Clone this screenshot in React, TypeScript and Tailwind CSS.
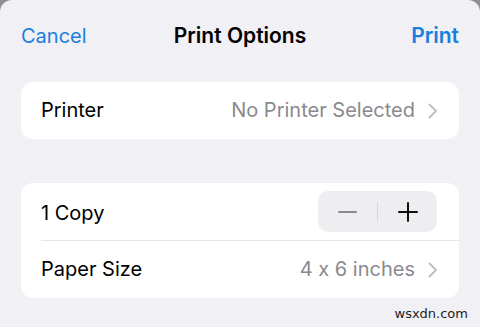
function Chevron() {
    return (
        <svg width="10" height="16" viewBox="0 0 10 16" className="mt-[1px]">
            <path d="M1.5 1.5 L8 8 L1.5 14.5" fill="none" stroke="#c0c0c4" strokeWidth="2" strokeLinecap="round" strokeLinejoin="round" />
        </svg>
    )
}

function Row({ label, value }: { label: string; value: string }) {
    return (
        <div className="flex h-[57px] items-center justify-between pb-[1px] pl-5 pr-[21px]">
            <span className="text-[20px] text-black">{label}</span>
            <span className="flex items-center gap-[13px] text-[20px] text-[#8a8a8e]">
                {value}
                <Chevron />
            </span>
        </div>
    )
}

export default function App() {
    return (
        <div className="h-[327px] w-[480px] bg-[#8e8e93] [font-feature-settings:'calt'_0]" style={{ fontFamily: "Inter, 'Noto Sans', sans-serif" }}>
            <div className="relative flex h-full flex-col rounded-t-[12px] bg-[#f1f0f5] px-[21px]">
                <header className="flex h-[72px] items-center justify-between text-[20px]">
                    <span className="w-[90px] text-[#1a7fdc]">Cancel</span>
                    <span className="text-[21px] font-semibold text-black">Print Options</span>
                    <span className="w-[90px] text-right text-[21px] font-semibold text-[#1a7fdc]">Print</span>
                </header>

                <div className="mt-[10px] rounded-[12px] bg-white">
                    <Row label="Printer" value="No Printer Selected" />
                </div>

                <div className="mt-[44px] rounded-[12px] bg-white">
                    <div className="flex h-[57px] items-center justify-between pl-5 pr-[22px]">
                        <span className="mt-[2px] text-[20px] text-black">1 Copy</span>
                        <div className="flex h-[41px] w-[119px] items-center rounded-[10px] bg-[#eeeef0]">
                            <button className="flex flex-1 items-center justify-center">
                                <span className="block h-[2px] w-[19px] rounded bg-[#8a8a8e]" />
                            </button>
                            <span className="h-[19px] w-px bg-[#d8d8dc]" />
                            <button className="flex flex-1 items-center justify-center">
                                <svg width="20" height="20" viewBox="0 0 20 20">
                                    <path d="M10 1v18M1 10h18" stroke="#111" strokeWidth="2" strokeLinecap="round" />
                                </svg>
                            </button>
                        </div>
                    </div>
                    <div className="ml-5 h-px bg-[#e4e4e8]" />
                    <Row label="Paper Size" value="4 x 6 inches" />
                </div>

                <div className="absolute bottom-[4px] right-[12px] text-[13px] text-[#222]" style={{ fontFamily: "'DejaVu Sans', sans-serif" }}>
                    wsxdn.com
                </div>
            </div>
        </div>
    )
}
